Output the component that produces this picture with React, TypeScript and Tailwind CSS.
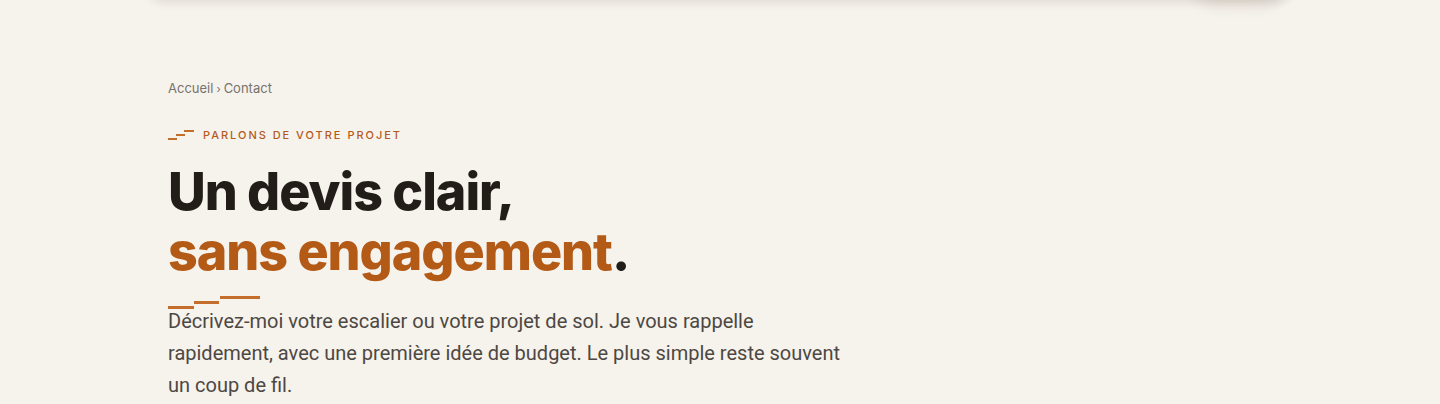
export default function App() {
  return (
    <div className="relative min-h-[404px] overflow-hidden bg-[#f6f2ec] font-['Inter',sans-serif]">
      {/* sticky header, scrolled almost out of view */}
      <div className="pointer-events-none absolute inset-x-0 top-0 flex justify-center">
        <div className="relative -mt-[70px] h-[70px] w-[1144px] rounded-b-2xl bg-[#f7f3ee] shadow-[0_2px_10px_rgba(60,40,20,0.12)]">
          <div className="absolute right-[10px] bottom-0 h-[40px] w-[88px] rounded-full bg-[#f7f3ee] shadow-[0_6px_14px_rgba(60,40,20,0.10)]" />
        </div>
      </div>

      <main className="mx-auto max-w-[1152px] px-6 pt-[79px]">
        <nav className="flex items-center gap-[3px] text-[13px] text-[#77726c]">
          <span>Accueil</span>
          <span className="text-[11px]">›</span>
          <span>Contact</span>
        </nav>

        <div className="mt-[28px] flex items-center gap-[9px]">
          <svg width="26" height="12" viewBox="0 0 26 12" className="shrink-0">
            <rect x="0" y="9" width="9" height="2" fill="#c56e2b" />
            <rect x="8" y="5" width="9" height="2" fill="#c56e2b" />
            <rect x="16" y="1" width="10" height="2" fill="#c56e2b" />
          </svg>
          <span className="text-[11px] font-medium tracking-[0.18em] text-[#b45a1c]">
            PARLONS DE VOTRE PROJET
          </span>
        </div>

        <h1 className="mt-[19px] text-[52px] leading-[60px] font-extrabold tracking-[-0.02em] text-[#221d18]">
          Un devis clair,
          <br />
          <span className="text-[#b45a17]">sans engagement</span>.
        </h1>

        <svg width="92" height="14" viewBox="0 0 92 14" className="mt-[14px] block">
          <rect x="0" y="10" width="26" height="3" fill="#c56e2b" />
          <rect x="26" y="5" width="25" height="3" fill="#c56e2b" />
          <rect x="52" y="0" width="40" height="3" fill="#c56e2b" />
        </svg>

        <p className="-mt-[5px] max-w-[682px] font-['Roboto',sans-serif] text-[20px] leading-[32px] text-[#4d4843]">
          Décrivez-moi votre escalier ou votre projet de sol. Je vous rappelle rapidement, avec une première idée de
          budget. Le plus simple reste souvent un coup de fil.
        </p>
      </main>
    </div>
  );
}
